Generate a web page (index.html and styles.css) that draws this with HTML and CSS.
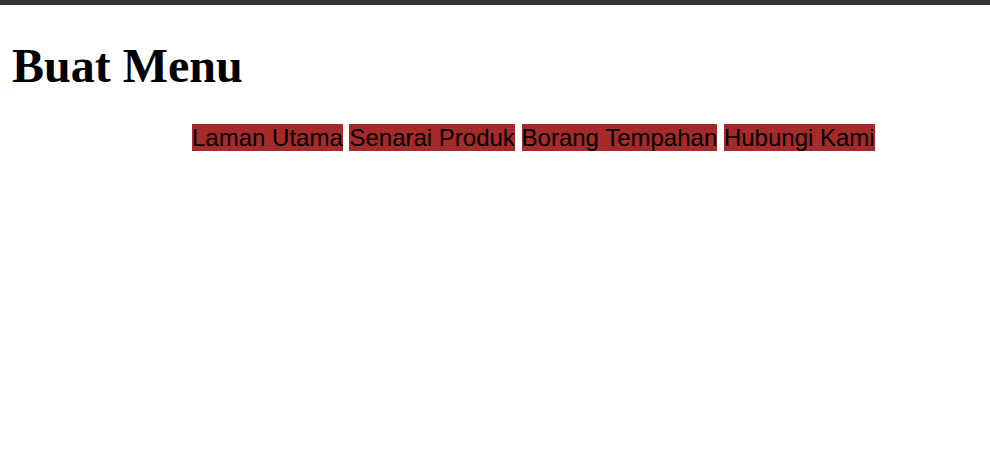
FILE: index.html
```html
<!DOCTYPE html>
<html>
<head>
<meta charset="utf-8">
<title>Buat Menu</title>
<link rel="stylesheet" href="styles.css">
</head>
<body>
<div class="topbar"></div>
<main class="page">
  <h1 class="title">Buat Menu</h1>
  <nav class="menu">
    <a class="menu-item" href="#">Laman Utama</a>
    <a class="menu-item" href="#">Senarai Produk</a>
    <a class="menu-item" href="#">Borang Tempahan</a>
    <a class="menu-item" href="#">Hubungi Kami</a>
  </nav>
</main>
</body>
</html>
```
FILE: styles.css
```css
html, body {
  margin: 0;
  padding: 0;
  background: #ffffff;
}
.topbar {
  height: 5px;
  background: #333333;
}
.page {
  padding: 33px 12px 0 12px;
}
.title {
  margin: 0 0 31px 0;
  font-family: "Liberation Serif", "Times New Roman", serif;
  font-weight: bold;
  font-size: 48px;
  line-height: 55px;
  color: #000;
}
.menu {
  padding-left: 180px;
  font-family: "Liberation Sans", Arial, sans-serif;
  font-size: 24px;
}
.menu-item {
  background: #a52a2a;
  color: #000;
  text-decoration: none;
}
```
